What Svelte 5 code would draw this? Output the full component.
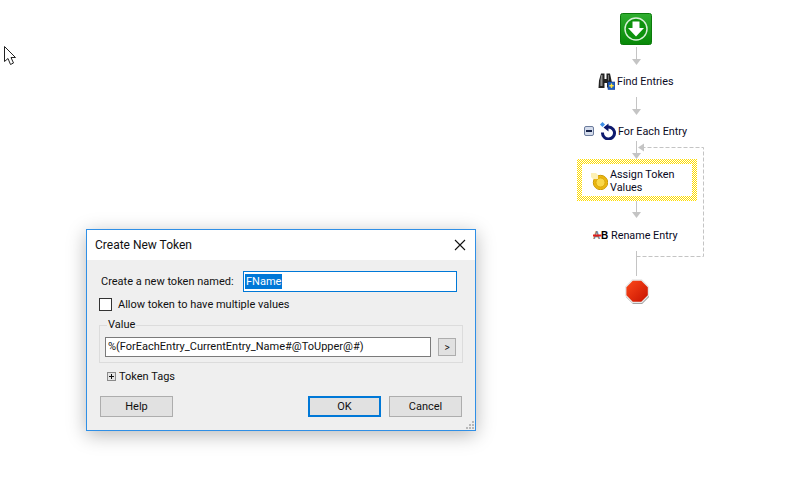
<script lang="ts">
  let tokenName = $state('FName');
  let tokenValue = $state('%(ForEachEntry_CurrentEntry_Name#@ToUpper@#)');
  let multiple = $state(false);
</script>

<div class="canvas">
  <!-- mouse pointer -->
  <svg class="pointer" width="16" height="20" viewBox="0 0 16 20">
    <path d="M0.5 0.5V15.5L4 12.5L6.5 18.5L9.5 17L7 11.5H11.5Z" fill="#fff" stroke="#222" stroke-width="1" />
  </svg>

  <!-- connectors -->
  <svg class="wires" width="802" height="487" viewBox="0 0 802 487">
    <g stroke="#c4c4c4" fill="none">
      <path d="M636.5 47V60M636.5 97V110M636.5 141V153M636.5 201V213M636.5 251V276" />
      <path d="M636.5 256.5H703.5V147.5H643" stroke-dasharray="4 2" />
    </g>
    <g fill="#c4c4c4">
      <path d="M632 59H641L636.5 65Z" />
      <path d="M632 109H641L636.5 115Z" />
      <path d="M632 153H641L636.5 159Z" />
      <path d="M632 212H641L636.5 218Z" />
      <path d="M644 143.5V151.5L638 147.5Z" />
    </g>
  </svg>

  <!-- start -->
  <svg class="node" style="left:620px;top:13px" width="33" height="33" viewBox="0 0 33 33">
    <defs>
      <linearGradient id="startFill" x1="0" y1="0" x2="0" y2="1">
        <stop offset="0" stop-color="#2fae2f" />
        <stop offset="1" stop-color="#078807" />
      </linearGradient>
    </defs>
    <rect x="0.5" y="0.5" width="31" height="31" rx="2" fill="url(#startFill)" stroke="#0b7a0b" />
    <circle cx="16" cy="16" r="11" fill="#0d920d" stroke="#d8f0d8" stroke-width="1.4" />
    <path d="M12.5 8.5H19.5V15H24L16 23.5L8 15H12.5Z" fill="#fff" />
  </svg>

  <!-- find entries -->
  <div class="node step" style="left:598px;top:72px">
    <svg width="17" height="18" viewBox="0 0 17 18">
      <path d="M3 1.5H6.5V7H8.5V1.5H12L13.5 8.5L15 15.5H9V11H6.5V16H0.5L1 8.5Z" fill="#222" />
      <path d="M3.2 3H4.5V14H2.4V8.5ZM10.2 3H11V8.5H10.2Z" fill="#8f8f8f" />
      <rect x="10" y="10" width="7" height="7.5" fill="#1f5fc4" stroke="#16408c" stroke-width="0.6" />
      <path d="M12.8 11.5H14.2V13H15.7V14.4H14.2V16H12.8V14.4H11.3V13H12.8Z" fill="#ffe23a" />
    </svg>
    <span class="step-label">Find Entries</span>
  </div>

  <!-- for each entry -->
  <div class="node step" style="left:584px;top:122px">
    <span class="collapse">
      <svg width="10" height="10" viewBox="0 0 10 10">
        <rect x="0.5" y="0.5" width="9" height="9" rx="1.5" fill="#d4dcec" stroke="#6c7c9c" />
        <rect x="2" y="4" width="6" height="2" fill="#18244a" />
      </svg>
    </span>
    <svg width="16" height="18" viewBox="0 0 16 18">
      <path d="M6 5.5A6 6 0 1 1 2.5 10.5" fill="none" stroke="#0e1a6e" stroke-width="3" />
      <path d="M8.5 1.5V9.5L3.5 5.5Z" fill="#0e1a6e" />
      <path d="M2.5 0L5 2.5L2.5 5L0 2.5Z" fill="#3d8fe8" />
    </svg>
    <span class="step-label">For Each Entry</span>
  </div>

  <!-- assign token values (selected) -->
  <div class="node selected">
    <div class="selected-inner">
      <svg width="17" height="18" viewBox="0 0 17 18">
        <circle cx="9.5" cy="10.5" r="7.2" fill="#eeb80e" stroke="#c99a08" />
        <circle cx="9.5" cy="10.5" r="4.6" fill="#fad84a" stroke="#d6a50e" />
        <path d="M0 1H5L7 3V7H2L0 5Z" fill="#fdf0b4" />
      </svg>
      <span class="step-label wrap">Assign Token Values</span>
    </div>
  </div>

  <!-- rename entry -->
  <div class="node step" style="left:593px;top:227px">
    <svg width="16" height="16" viewBox="0 0 16 16">
      <text x="0" y="12" class="glyph-a">A</text>
      <text x="8" y="12" class="glyph-b">B</text>
      <rect x="0" y="7.5" width="8.5" height="2" fill="#e01c1c" />
    </svg>
    <span class="step-label">Rename Entry</span>
  </div>

  <!-- stop -->
  <svg class="node" style="left:625px;top:279px" width="26" height="26" viewBox="0 0 26 26">
    <defs>
      <linearGradient id="stopFill" x1="0" y1="0" x2="1" y2="1">
        <stop offset="0" stop-color="#ff4a1a" />
        <stop offset="1" stop-color="#c41000" />
      </linearGradient>
    </defs>
    <path d="M8 2H17L24 9V18L17 25H8L1 18V9Z" fill="#8c8c8c" />
    <path d="M7.5 1H16.5L23.5 8V16.5L16.5 23.5H7.5L0.7 16.5V8Z" fill="url(#stopFill)" stroke="#e8e8e8" stroke-width="1.4" />
  </svg>

  <!-- dialog -->
  <div class="dialog">
    <header class="titlebar">
      <span>Create New Token</span>
      <svg class="close" width="12" height="12" viewBox="0 0 12 12">
        <path d="M1 1L11 11M11 1L1 11" stroke="#111" stroke-width="1.1" fill="none" />
      </svg>
    </header>

    <div class="body">
      <div class="name-row">
        <span>Create a new token named:</span>
        <div class="name-field"><span class="selection">{tokenName}</span></div>
      </div>

      <div class="check-row">
        <span class="checkbox" class:on={multiple}></span>
        <span>Allow token to have multiple values</span>
      </div>

      <fieldset class="value-group">
        <legend>Value</legend>
        <div class="value-field">{tokenValue}</div>
        <span class="more">&gt;</span>
      </fieldset>

      <div class="tags-row">
        <svg width="9" height="9" viewBox="0 0 9 9">
          <rect x="0.5" y="0.5" width="8" height="8" fill="#e4e4e4" stroke="#8a8a8a" />
          <path d="M2 4.5H7M4.5 2V7" stroke="#111" fill="none" />
        </svg>
        <span>Token Tags</span>
      </div>

      <div class="buttons">
        <span class="btn">Help</span>
        <span class="spacer"></span>
        <span class="btn default">OK</span>
        <span class="btn">Cancel</span>
      </div>
    </div>

    <svg class="grip" width="10" height="10" viewBox="0 0 10 10">
      <path d="M7 1h2v2H7zM4 4h2v2H4zM7 4h2v2H7zM1 7h2v2H1zM4 7h2v2H4zM7 7h2v2H7z" fill="#b8b8b8" />
    </svg>
  </div>
</div>

<style>
  :global(body) {
    margin: 0;
    background: #fff;
  }

  .canvas {
    position: relative;
    width: 802px;
    height: 487px;
    overflow: hidden;
    background: #fff;
    font-family: Roboto, "Liberation Sans", sans-serif;
    font-size: 11px;
    color: #111;
  }

  .pointer {
    position: absolute;
    left: 4px;
    top: 46px;
  }

  .wires {
    position: absolute;
    left: 0;
    top: 0;
  }

  .node {
    position: absolute;
  }

  .step {
    display: flex;
    align-items: center;
    gap: 2px;
    white-space: nowrap;
  }

  .step-label {
    font-family: Roboto, "Liberation Sans", sans-serif;
    font-size: 10.8px;
    line-height: 13px;
    color: #0a0a1e;
  }

  .collapse {
    display: flex;
    margin-right: 4px;
  }

  .glyph-a,
  .glyph-b {
    font-family: "Liberation Sans", sans-serif;
    font-size: 10px;
    font-weight: 700;
  }

  .glyph-a {
    fill: #7c7c7c;
  }

  .glyph-b {
    fill: #000;
  }

  .selected {
    left: 577px;
    top: 159px;
    box-sizing: border-box;
    width: 120px;
    height: 42px;
    padding: 5px;
    background: repeating-conic-gradient(#ffdc00 0deg 90deg, #fff 90deg 180deg) 0 0 / 2px 2px;
  }

  .selected-inner {
    box-sizing: border-box;
    height: 100%;
    display: flex;
    align-items: center;
    gap: 2px;
    padding: 1px 0 0 9px;
    background: #fff;
  }

  .wrap {
    width: 76px;
  }

  .dialog {
    position: absolute;
    left: 86px;
    top: 229px;
    box-sizing: border-box;
    width: 390px;
    height: 202px;
    display: flex;
    flex-direction: column;
    background: #efefef;
    border: 1px solid #2f8fe6;
    box-shadow: 0 4px 18px rgba(0, 0, 0, 0.28);
  }

  .titlebar {
    flex: none;
    height: 30px;
    display: flex;
    align-items: center;
    justify-content: space-between;
    padding: 0 9px 0 8px;
    background: #fff;
    font-size: 12px;
  }

  .body {
    flex: 1;
    display: flex;
    flex-direction: column;
    padding: 11px 12px 13px 12px;
    min-height: 0;
  }

  .name-row {
    display: flex;
    align-items: center;
    justify-content: space-between;
    padding: 0 6px 0 2px;
    height: 21px;
  }

  .name-field {
    box-sizing: border-box;
    width: 214px;
    height: 21px;
    display: flex;
    align-items: center;
    padding-left: 1px;
    background: #fff;
    border: 1px solid #0078d7;
  }

  .selection {
    background: #0078d7;
    color: #fff;
    line-height: 15px;
    padding: 0 1px;
  }

  .check-row {
    display: flex;
    align-items: center;
    gap: 6px;
    margin-top: 5px;
    height: 15px;
  }

  .checkbox {
    box-sizing: border-box;
    width: 13px;
    height: 13px;
    background: #fff;
    border: 1px solid #333;
  }

  .value-group {
    box-sizing: border-box;
    height: 44px;
    margin: 7px 0 0 0;
    padding: 6px 6px 0 5px;
    display: flex;
    align-items: center;
    gap: 7px;
    border: 1px solid #dcdcdc;
    min-width: 0;
  }

  .value-group legend {
    padding: 0 1px;
    margin-left: 2px;
    line-height: 12px;
  }

  .value-field {
    box-sizing: border-box;
    flex: 1;
    height: 20px;
    line-height: 18px;
    padding-left: 2px;
    background: #fff;
    border: 1px solid #7a7a7a;
    white-space: nowrap;
  }

  .more {
    flex: none;
    box-sizing: border-box;
    width: 18px;
    height: 18px;
    display: flex;
    align-items: center;
    justify-content: center;
    background: #e1e1e1;
    border: 1px solid #adadad;
    font-size: 10px;
  }

  .tags-row {
    display: flex;
    align-items: center;
    gap: 3px;
    margin: 6px 0 0 8px;
    height: 15px;
  }

  .buttons {
    display: flex;
    gap: 8px;
    margin-top: auto;
    padding-left: 1px;
    margin-right: 1px;
  }

  .spacer {
    flex: 1;
  }

  .btn {
    box-sizing: border-box;
    width: 73px;
    height: 21px;
    display: flex;
    align-items: center;
    justify-content: center;
    background: #e1e1e1;
    border: 1px solid #adadad;
  }

  .btn.default {
    border: 2px solid #0078d7;
  }

  .grip {
    position: absolute;
    right: 0;
    bottom: 0;
  }
</style>
